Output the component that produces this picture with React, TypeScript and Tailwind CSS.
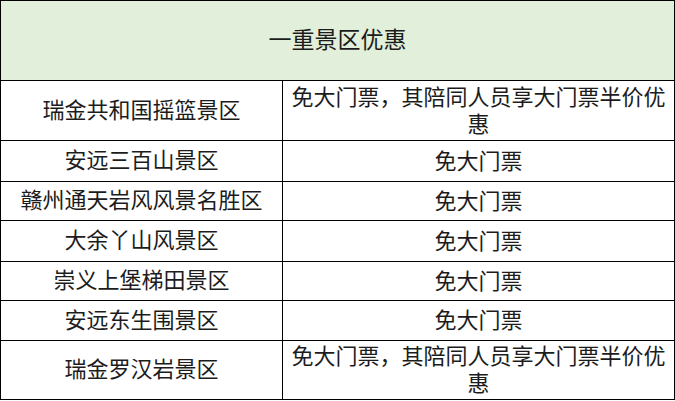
import React from "react";

type Row = {
  name: string;
  offer: string;
  height: string;
};

const rows: Row[] = [
  { name: "瑞金共和国摇篮景区", offer: "免大门票，其陪同人员享大门票半价优惠", height: "h-[60px]" },
  { name: "安远三百山景区", offer: "免大门票", height: "h-[41px]" },
  { name: "赣州通天岩风风景名胜区", offer: "免大门票", height: "h-[39px]" },
  { name: "大余丫山风景区", offer: "免大门票", height: "h-[41px]" },
  { name: "崇义上堡梯田景区", offer: "免大门票", height: "h-[39px]" },
  { name: "安远东生围景区", offer: "免大门票", height: "h-[40px]" },
  { name: "瑞金罗汉岩景区", offer: "免大门票，其陪同人员享大门票半价优惠", height: "h-[58px]" },
];

const App = () => {
  return (
    <div className="w-[675px] h-[401px] bg-white">
      <div className="w-[675px] border border-black text-[#1c1c1c] font-['Liberation_Serif','Noto_Sans_CJK_SC',serif]">
        {/* header */}
        <div className="h-[80px] border-b border-black bg-[#e2efda] flex items-center justify-center">
          <span className="text-[23px] leading-none">一重景区优惠</span>
        </div>

        {rows.map((row, i) => (
          <div
            key={i}
            className={`${row.height} flex ${i < rows.length - 1 ? "border-b border-black" : ""}`}
          >
            <div className="w-[282px] border-r border-black flex items-center justify-center text-[22px] leading-none">
              {row.name}
            </div>
            <div className="flex-1 flex items-center justify-center px-[8px] text-[22px] leading-[27px] text-center">
              {row.offer}
            </div>
          </div>
        ))}
      </div>
    </div>
  );
};

export default App;
